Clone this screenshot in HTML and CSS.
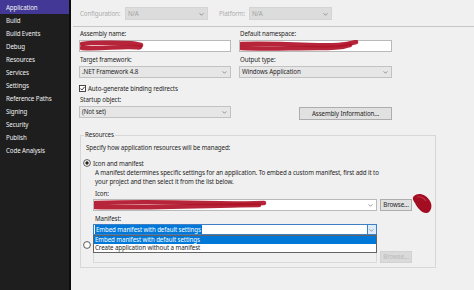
FILE: index.html
```html
<!DOCTYPE html>
<html lang="en">
<head>
    <meta charset="UTF-8">
    <title>Application Properties</title>
    <link rel="stylesheet" href="styles.css">
</head>
<body>
    <div class="window">
        <nav class="sidebar">
            <div class="nav-item active">Application</div>
            <div class="nav-item">Build</div>
            <div class="nav-item">Build Events</div>
            <div class="nav-item">Debug</div>
            <div class="nav-item">Resources</div>
            <div class="nav-item">Services</div>
            <div class="nav-item">Settings</div>
            <div class="nav-item">Reference Paths</div>
            <div class="nav-item">Signing</div>
            <div class="nav-item">Security</div>
            <div class="nav-item">Publish</div>
            <div class="nav-item">Code Analysis</div>
        </nav>
        <main class="content">
            <div class="toolbar">
                <span class="dim-label conf-label">Configuration:</span>
                <div class="combo disabled">N/A<svg class="chev" viewBox="0 0 6 4"><path d="M0.5 0.5 L3 3 L5.5 0.5"/></svg></div>
                <span class="dim-label plat-label">Platform:</span>
                <div class="combo disabled">N/A<svg class="chev" viewBox="0 0 6 4"><path d="M0.5 0.5 L3 3 L5.5 0.5"/></svg></div>
            </div>
            <div class="page">
                <div class="grid">
                    <div class="field">
                        <label>Assembly name:</label>
                        <div class="textbox">
                            <svg class="scribble" width="70" height="12" viewBox="0 0 70 12"><path d="M2 4 C14 2 28 3 42 3 S56 4 61 5"/><path d="M2 8 C18 9 34 7 48 7 S58 8 60 7"/></svg>
                        </div>
                    </div>
                    <div class="field">
                        <label>Default namespace:</label>
                        <div class="textbox">
                            <svg class="scribble" width="125" height="12" viewBox="0 0 125 12"><path d="M1 4 C20 3 45 4 70 5 S105 5 116 2"/><path d="M1 8 C25 9 50 8 78 8 S100 7 110 5"/></svg>
                        </div>
                    </div>
                    <div class="field">
                        <label>Target framework:</label>
                        <div class="combo">.NET Framework 4.8<svg class="chev" viewBox="0 0 6 4"><path d="M0.5 0.5 L3 3 L5.5 0.5"/></svg></div>
                    </div>
                    <div class="field">
                        <label>Output type:</label>
                        <div class="combo">Windows Application<svg class="chev" viewBox="0 0 6 4"><path d="M0.5 0.5 L3 3 L5.5 0.5"/></svg></div>
                    </div>
                    <div class="check-row">
                        <svg class="checkbox" width="7" height="7" viewBox="0 0 7 7"><rect x="0.5" y="0.5" width="6" height="6"/><path d="M1.4 3.5 L2.9 5 L5.6 1.9"/></svg>
                        <span>Auto-generate binding redirects</span>
                    </div>
                    <div class="field">
                        <label>Startup object:</label>
                        <div class="combo">(Not set)<svg class="chev" viewBox="0 0 6 4"><path d="M0.5 0.5 L3 3 L5.5 0.5"/></svg></div>
                    </div>
                    <div class="field">
                        <label></label>
                        <button class="btn info-btn">Assembly Information...</button>
                    </div>
                </div>

                <fieldset class="group">
                    <legend>Resources</legend>
                    <div class="hint">Specify how application resources will be managed:</div>
                    <div class="radio-row first">
                        <svg class="radio" width="8" height="8" viewBox="0 0 8 8"><circle cx="4" cy="4" r="3.4"/><circle class="dot" cx="4" cy="4" r="1.7"/></svg>
                        <span>Icon and manifest</span>
                    </div>
                    <div class="indent">
                        <p class="desc">A manifest determines specific settings for an application. To embed a custom manifest, first add it to your project and then select it from the list below.</p>
                        <div class="sub-label">Icon:</div>
                        <div class="file-row">
                            <div class="combo edit">
                                <svg class="scribble" width="175" height="12" viewBox="0 0 175 12"><path d="M1 4 C30 3 70 3 110 4 S160 4 170 4"/><path d="M1 8 C35 9 75 8 115 7 S150 6 165 6"/></svg>
                                <svg class="chev" viewBox="0 0 6 4"><path d="M0.5 0.5 L3 3 L5.5 0.5"/></svg>
                            </div>
                            <button class="btn browse">Browse...</button>
                            <svg class="blob" width="22" height="22" viewBox="0 0 22 22"><path d="M3 4 C7 0 15 2 19 9 C22 14 20 20 16 21 C12 22 6 16 4 11 C2 8 1 6 3 4 Z"/><path class="shine" d="M6 5 C9 4 13 6 15 9"/></svg>
                        </div>
                        <div class="sub-label">Manifest:</div>
                        <div class="manifest-row">
                            <div class="combo edit focused">
                                <span class="selected-text">Embed manifest with default settings</span>
                                <span class="drop-btn"><svg class="chev" viewBox="0 0 6 4"><path d="M0.5 0.5 L3 3 L5.5 0.5"/></svg></span>
                            </div>
                            <ul class="dropdown">
                                <li class="highlight">Embed manifest with default settings</li>
                                <li>Create application without a manifest</li>
                            </ul>
                        </div>
                    </div>
                    <div class="radio-row second">
                        <svg class="radio" width="8" height="8" viewBox="0 0 8 8"><circle cx="4" cy="4" r="3.4"/></svg>
                    </div>
                    <div class="indent file-row last">
                        <div class="textbox disabled"></div>
                        <button class="btn browse" disabled>Browse...</button>
                    </div>
                </fieldset>
            </div>
        </main>
    </div>
</body>
</html>
```

FILE: styles.css
```css
* {
    box-sizing: border-box;
}
body {
    margin: 0;
    width: 474px;
    height: 290px;
    overflow: hidden;
    font-family: "Noto Sans", "Open Sans", sans-serif;
    font-size: 6.2px;
    letter-spacing: -0.1px;
    color: #262626;
    background: #f0f0f0;
}
.window {
    display: flex;
    height: 290px;
}
.sidebar {
    width: 71px;
    flex-shrink: 0;
    background: #1e1e1e;
    border-right: 2px solid #0c0c0c;
    padding-top: 1px;
}
.nav-item {
    height: 13px;
    line-height: 13px;
    padding-left: 6px;
    color: #f1f1f1;
    white-space: nowrap;
}
.nav-item.active {
    background: #433896;
    margin-top: -1px;
    height: 14px;
    line-height: 15px;
}
.content {
    flex: 1;
    background: #f0f0f0;
}
.toolbar {
    height: 27px;
    margin-left: 2px;
    padding: 7px 0 0 7px;
    border-bottom: 1px solid #c6c6c6;
    display: flex;
    align-items: flex-start;
}
.dim-label {
    color: #acacac;
    line-height: 13px;
}
.conf-label {
    width: 45px;
}
.plat-label {
    width: 30px;
    margin-left: 11px;
}
.toolbar .combo {
    width: 83px;
    height: 13px;
}
.combo {
    position: relative;
    height: 12px;
    line-height: 10px;
    padding-left: 2px;
    border: 1px solid #c2c2c2;
    background: #e6e6e6;
    white-space: nowrap;
}
.combo.disabled {
    background: #dcdcdc;
    border-color: #d4d4d4;
    color: #a2a2a2;
    line-height: 11px;
}
.combo.edit {
    background: #fff;
    border-color: #b9b9b9;
}
.chev {
    position: absolute;
    right: 3px;
    top: 50%;
    width: 5px;
    height: 3px;
    margin-top: -1px;
}
.chev path {
    fill: none;
    stroke: #6a6a6a;
    stroke-width: 0.9;
}
.page {
    padding: 1px 0 0 8px;
}
.grid {
    display: grid;
    grid-template-columns: 152px 153px;
    column-gap: 8px;
}
.field label {
    display: block;
    height: 12px;
    line-height: 12px;
    padding-left: 1px;
}
.grid .field:nth-child(3),
.grid .field:nth-child(4) {
    margin-top: 2px;
}
.textbox {
    position: relative;
    height: 12px;
    border: 1px solid #b9b9b9;
    background: #fff;
}
.textbox.disabled {
    background: #f0f0f0;
    border-color: #d9d9d9;
}
.scribble {
    position: absolute;
    left: 0;
    top: -1px;
}
.scribble path {
    fill: none;
    stroke: #b01228;
    stroke-width: 4.5;
    stroke-linecap: round;
    opacity: 0.92;
}
.check-row {
    grid-column: span 2;
    display: flex;
    align-items: center;
    gap: 2px;
    height: 12px;
    margin-top: 4px;
}
.checkbox rect {
    fill: #fff;
    stroke: #333;
    stroke-width: 0.9;
}
.checkbox path {
    fill: none;
    stroke: #222;
    stroke-width: 0.9;
}
.btn {
    font: inherit;
    letter-spacing: inherit;
    height: 12px;
    padding: 0;
    line-height: 10px;
    color: #262626;
    background: #e1e1e1;
    border: 1px solid #adadad;
    border-radius: 0;
}
.info-btn {
    display: block;
    width: 93px;
    height: 13px;
    margin: 1px 0 0 auto;
}
.group {
    margin: 10px 0 0 1px;
    width: 356px;
    padding: 0 0 4px 2px;
    border: 1px solid #d7d7d7;
    min-width: 0;
}
.group legend {
    margin-left: 1px;
    padding: 0 1px;
    line-height: 10px;
}
.hint {
    margin: 3px 0 0 3px;
    line-height: 10px;
}
.radio-row {
    display: flex;
    align-items: center;
    gap: 2px;
    height: 10px;
}
.radio-row.first {
    margin-top: 5px;
}
.radio-row.second {
    margin-top: 5px;
}
.radio circle {
    fill: #fff;
    stroke: #333;
    stroke-width: 0.8;
}
.radio circle.dot {
    fill: #222;
    stroke: none;
}
.indent {
    margin-left: 10px;
}
.desc {
    margin: 0 0 0 2px;
    width: 284px;
    line-height: 9px;
}
.sub-label {
    margin: 3px 0 0 2px;
    line-height: 10px;
}
.file-row {
    position: relative;
    display: flex;
    gap: 3px;
}
.file-row .combo,
.file-row .textbox {
    width: 284px;
}
.browse {
    width: 32px;
}
.browse:disabled {
    background: #dadada;
    border-color: #d2d2d2;
    color: #b9b9b9;
}
.file-row.last {
    margin-top: 1px;
}
.blob {
    position: absolute;
    left: 318px;
    top: -7px;
}
.blob path {
    fill: #a20d22;
}
.blob .shine {
    fill: none;
    stroke: #c8324a;
    stroke-width: 1.2;
}
.manifest-row {
    position: relative;
    width: 284px;
}
.combo.focused {
    height: 11px;
    line-height: 9px;
    padding-left: 1px;
    border-color: #3c7fc4;
}
.selected-text {
    background: #0078d7;
    color: #fff;
    padding: 0 1px;
}
.drop-btn {
    position: absolute;
    right: 0;
    top: 0;
    width: 9px;
    height: 9px;
    background: #dcecfc;
    border-left: 1px solid #3c7fc4;
}
.drop-btn .chev {
    right: 2px;
}
.dropdown {
    position: absolute;
    left: 0;
    top: 11px;
    width: 284px;
    margin: 0;
    padding: 0;
    list-style: none;
    background: #fff;
    border: 1px solid #646464;
    z-index: 2;
}
.dropdown li {
    height: 8px;
    line-height: 8px;
    padding-left: 1px;
    white-space: nowrap;
}
.dropdown li.highlight {
    background: #0078d7;
    color: #fff;
}
```
